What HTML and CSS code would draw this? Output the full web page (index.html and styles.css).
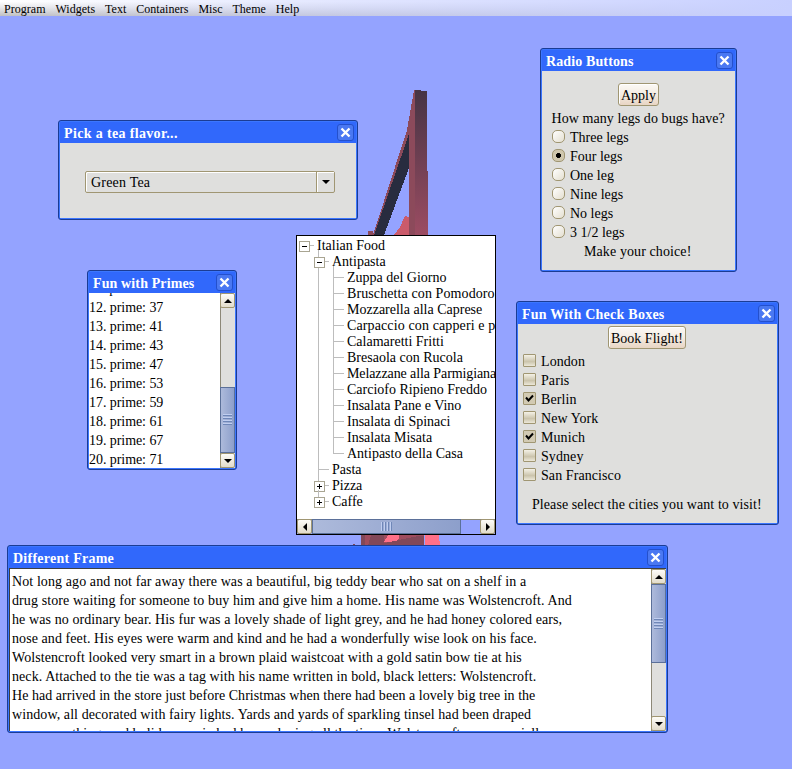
FILE: index.html
```html
<!DOCTYPE html>
<html lang="en">
<head>
<meta charset="utf-8">
<title>Desktop</title>
<link rel="stylesheet" href="styles.css">
</head>
<body>
<nav class="menubar"><span>Program</span><span>Widgets</span><span>Text</span><span>Containers</span><span>Misc</span><span>Theme</span><span>Help</span></nav>

<svg class="scene" viewBox="360 90 82 456" shape-rendering="crispEdges">
  <defs><linearGradient id="beam" x1="0" y1="0" x2="0" y2="1"><stop offset="0" stop-color="#453444"/><stop offset="1" stop-color="#9c4c62"/></linearGradient></defs>
  <path d="M414 90H416V235H373L407 130Z" fill="#8c4a5b"/>
  <path d="M415 90L427 91V171H428V235H415Z" fill="url(#beam)"/>
  <path d="M409 168V235H384Z" fill="#94a3ff"/>
  <path d="M409 134V168L384 235H374Z" fill="#282c3f"/>
  <path d="M394 235L400 227L405 216L409 217V235Z" fill="#cb5b6b"/>
  <path d="M368 231H373V235H368Z" fill="#8c4a5b"/>
  <path d="M361 535H424V546H361Z" fill="#9f4c5e"/>
  <path d="M353 544H355V546H353Z M361 535H365V546H361Z M371 535L368 546H384V535Z" fill="#824858"/>
  <path d="M388 535H399V539L395 542H384Z" fill="#ff7088"/>
  <path d="M425 535H439L440 546H425Z" fill="#ff7088"/>
  <path d="M380 544L418 536H424V546H380Z" fill="#824858"/>
</svg>

<section class="window tea">
  <header class="title"><span>Pick a tea flavor...</span><i class="close"><svg viewBox="0 0 17 17"><path d="M4.5 4.5L12.5 12.5M12.5 4.5L4.5 12.5"/></svg></i></header>
  <div class="pane"><div class="combo"><span>Green Tea</span><i><svg viewBox="0 0 8 4"><path d="M0 0H8L4 4Z"/></svg></i></div></div>
</section>

<section class="window primes">
  <header class="title"><span>Fun with Primes</span><i class="close"><svg viewBox="0 0 17 17"><path d="M4.5 4.5L12.5 12.5M12.5 4.5L4.5 12.5"/></svg></i></header>
  <div class="scrollpane">
    <ul class="list"><li>11. prime: 31</li><li>12. prime: 37</li><li>13. prime: 41</li><li>14. prime: 43</li><li>15. prime: 47</li><li>16. prime: 53</li><li>17. prime: 59</li><li>18. prime: 61</li><li>19. prime: 67</li><li>20. prime: 71</li></ul>
    <div class="vbar"><b class="arrow"><svg viewBox="0 0 8 4"><path d="M0 4H8L4 0Z"/></svg></b><div class="gap"></div><div class="thumb"><i class="grip"></i></div><b class="arrow"><svg viewBox="0 0 8 4"><path d="M0 0H8L4 4Z"/></svg></b></div>
  </div>
</section>

<section class="window radios">
  <header class="title"><span>Radio Buttons</span><i class="close"><svg viewBox="0 0 17 17"><path d="M4.5 4.5L12.5 12.5M12.5 4.5L4.5 12.5"/></svg></i></header>
  <div class="pane">
    <button class="button">Apply</button>
    <p class="question">How many legs do bugs have?</p>
    <label class="opt"><i class="radio"></i>Three legs</label>
    <label class="opt"><i class="radio on"></i>Four legs</label>
    <label class="opt"><i class="radio"></i>One leg</label>
    <label class="opt"><i class="radio"></i>Nine legs</label>
    <label class="opt"><i class="radio"></i>No legs</label>
    <label class="opt"><i class="radio"></i>3 1/2 legs</label>
    <p class="note">Make your choice!</p>
  </div>
</section>

<section class="window checks">
  <header class="title"><span>Fun With Check Boxes</span><i class="close"><svg viewBox="0 0 17 17"><path d="M4.5 4.5L12.5 12.5M12.5 4.5L4.5 12.5"/></svg></i></header>
  <div class="pane">
    <button class="button">Book Flight!</button>
    <label class="opt"><i class="check"></i>London</label>
    <label class="opt"><i class="check"></i>Paris</label>
    <label class="opt"><i class="check on"><svg viewBox="0 0 13 13"><path d="M3 5.5L5.5 8.5L10 3.5"/></svg></i>Berlin</label>
    <label class="opt"><i class="check"></i>New York</label>
    <label class="opt"><i class="check on"><svg viewBox="0 0 13 13"><path d="M3 5.5L5.5 8.5L10 3.5"/></svg></i>Munich</label>
    <label class="opt"><i class="check"></i>Sydney</label>
    <label class="opt"><i class="check"></i>San Francisco</label>
    <p class="note">Please select the cities you want to visit!</p>
  </div>
</section>

<section class="treebox">
  <div class="treeview">
    <ul class="tree">
      <li class="root open"><span>Italian Food</span>
        <ul>
          <li class="open"><span>Antipasta</span>
            <ul>
              <li><span>Zuppa del Giorno</span></li>
              <li><span class="wide">Bruschetta con Pomodoro</span></li>
              <li><span>Mozzarella alla Caprese</span></li>
              <li><span class="wider">Carpaccio con capperi e p</span></li>
              <li><span>Calamaretti Fritti</span></li>
              <li><span>Bresaola con Rucola</span></li>
              <li><span class="narrow">Melazzane alla Parmigiana</span></li>
              <li><span>Carciofo Ripieno Freddo</span></li>
              <li><span>Insalata Pane e Vino</span></li>
              <li><span>Insalata di Spinaci</span></li>
              <li><span>Insalata Misata</span></li>
              <li><span>Antipasto della Casa</span></li>
            </ul>
          </li>
          <li><span>Pasta</span></li>
          <li class="closed"><span>Pizza</span></li>
          <li class="closed"><span>Caffe</span></li>
        </ul>
      </li>
    </ul>
  </div>
  <div class="hbar"><b class="arrow"><svg viewBox="0 0 4 8"><path d="M4 0V8L0 4Z"/></svg></b><div class="thumb"><i class="grip"></i></div><div class="gap"></div><b class="arrow"><svg viewBox="0 0 4 8"><path d="M0 0V8L4 4Z"/></svg></b></div>
</section>

<section class="window story">
  <header class="title"><span>Different Frame</span><i class="close"><svg viewBox="0 0 17 17"><path d="M4.5 4.5L12.5 12.5M12.5 4.5L4.5 12.5"/></svg></i></header>
  <div class="scrollpane">
    <div class="text">
      <p>Not long ago and not far away there was a beautiful, big teddy bear who sat on a shelf in a</p>
      <p>drug store waiting for someone to buy him and give him a home. His name was Wolstencroft. And</p>
      <p>he was no ordinary bear. His fur was a lovely shade of light grey, and he had honey colored ears,</p>
      <p class="mid">nose and feet. His eyes were warm and kind and he had a wonderfully wise look on his face.</p>
      <p class="mid">Wolstencroft looked very smart in a brown plaid waistcoat with a gold satin bow tie at his</p>
      <p class="mid">neck. Attached to the tie was a tag with his name written in bold, black letters: Wolstencroft.</p>
      <p class="tight">He had arrived in the store just before Christmas when there had been a lovely big tree in the</p>
      <p class="mid">window, all decorated with fairy lights. Yards and yards of sparkling tinsel had been draped</p>
      <p class="mid">over everything, and holiday music had been playing all the time. Wolstencroft was especially</p>
    </div>
    <div class="vbar"><b class="arrow"><svg viewBox="0 0 8 4"><path d="M0 4H8L4 0Z"/></svg></b><div class="thumb"><i class="grip"></i></div><div class="gap"></div><b class="arrow"><svg viewBox="0 0 8 4"><path d="M0 0H8L4 4Z"/></svg></b></div>
  </div>
</section>
</body>
</html>
```
FILE: styles.css
```css
* { box-sizing: border-box; }
html, body { margin: 0; height: 100%; overflow: hidden; }
body { position: relative; background: #94a3ff; color: #000; font: 14px/19px "Liberation Serif", serif; }
p, ul { margin: 0; padding: 0; list-style: none; }
i, b { font-style: normal; display: block; flex: none; }
svg { display: block; }
span, p, li, label { white-space: nowrap; }

.menubar { display: flex; gap: 9.9px; height: 16px; padding: 1px 4px 0; font-size: 12px; line-height: 16px; letter-spacing: .03px;
  background: linear-gradient(90deg, rgba(200,208,255,0), rgba(200,208,255,.55) 45%, #c8d0ff), linear-gradient(#fff 10%, #e6e6e8 50%, #c0c0c2); }

.scene { position: absolute; left: 360px; top: 90px; width: 82px; height: 456px; overflow: visible; }

.window { position: absolute; display: flex; flex-direction: column; border: 1px solid #1b3c94; border-radius: 3px; background: #3b76ff; padding: 1px; overflow: hidden; }
.tea { left: 58px; top: 120px; width: 300px; height: 100px; }
.primes { left: 87px; top: 270px; width: 150px; height: 200px; }
.radios { left: 540px; top: 48px; width: 197px; height: 224px; }
.checks { left: 516px; top: 301px; width: 263px; height: 224px; }
.story { left: 7px; top: 545px; width: 661px; height: 188px; }

.title { display: flex; justify-content: space-between; align-items: center; height: 21px; flex: none; padding: 0 2px 0 4px; color: #fff; font-weight: bold; letter-spacing: .25px; background: #3168fb; }
.title span { padding-top: 2px; }
.tea .title { letter-spacing: .35px; }
.primes .title { letter-spacing: .12px; }
.radios .title { letter-spacing: .12px; }
.close { width: 17px; height: 17px; border: 1px solid #2450cc; border-radius: 3px; background: #4a78f2; }
.close svg { width: 17px; height: 17px; margin: -1px; }
.close path { stroke: #fff; stroke-width: 2.4; fill: none; }

.pane { flex: 1; background: #dfdfdd; display: flex; flex-direction: column; }
.scrollpane { flex: 1; min-height: 0; display: flex; background: #fff; overflow: hidden; }

.combo { display: flex; width: 250px; height: 22px; margin: 28px 0 0 25px; border: 1px solid #a09672; border-radius: 2px; box-shadow: inset 1px 1px #fff; letter-spacing: .2px; }
.combo span { flex: 1; padding: 1px 0 0 5px; }
.combo i { width: 18px; border-left: 1px solid #a09672; box-shadow: inset 1px 1px #fff; padding: 8px 0 0 5px; }
.combo svg { width: 8px; height: 4px; }

.list { flex: 1; margin-top: -14px; letter-spacing: -.06px; }
.vbar { width: 15px; flex: none; display: flex; flex-direction: column; background: #dfdfdd; border-left: 1px solid #8c8878; }
.arrow { width: 15px; height: 15px; border: 1px solid #a09672; border-radius: 2px; background: linear-gradient(#fdfcf8, #e2dccb); display: flex; align-items: center; justify-content: center; }
.vbar .arrow { margin-left: -1px; }
.vbar .arrow svg { width: 8px; height: 4px; }
.hbar .arrow svg { width: 4px; height: 8px; }
.thumb { display: flex; align-items: center; justify-content: center; flex: none; border: 1px solid #5b7099; background: linear-gradient(90deg, #adbadb, #8d9fcb); }
.vbar .thumb { margin-left: -1px; width: 15px; }
.gap { flex: 1; }
.vbar .grip { width: 9px; height: 12px; background: repeating-linear-gradient(#c0cef0 0 1px, #6f87b8 1px 2px, transparent 2px 3px); }
.primes .thumb { height: 66px; }
.story .thumb { height: 79px; }

.button { align-self: center; height: 23px; padding: 1px 0 0; font: inherit; color: #000; border: 1px solid #a09672; border-radius: 3px; background: linear-gradient(#fbf9f5, #f4ece2 50%, #e8d5c4); box-shadow: inset 1px 1px #fff; }
.opt { display: flex; align-items: flex-start; height: 19px; }
.radio { width: 13px; height: 13px; margin: 2px 5px 0 0; border: 1px solid #a09672; border-radius: 5px; background: linear-gradient(135deg, #fff, #e4dfd0); }
.radio.on { background: radial-gradient(circle, #000 0 2.2px, #cfc7ae 2.8px); }
.radios .pane { padding: 12px 0 0 10px; }
.radios .button { width: 41px; margin-right: 10px; }
.question { margin: 3px 0 0 -.5px; letter-spacing: .07px; }
.radios .note { margin-left: 32px; letter-spacing: .1px; }

.checks .pane { padding: 2px 0 0 5px; }
.checks .button { width: 78px; margin-right: 6px; margin-bottom: 3px; }
.checks .opt { letter-spacing: .08px; }
.check { width: 13px; height: 13px; margin: 2px 5px 0 0; border: 1px solid #a09672; border-radius: 1px; background: linear-gradient(#f4f1e6, #cbc4ac 60%, #ece8d9); }
.check.on { background: #d2cab3; }
.check svg { width: 13px; height: 13px; margin: -1px; }
.check path { stroke: #000; stroke-width: 2; fill: none; }
.checks .note { margin: 10px 0 0 9px; letter-spacing: .07px; }

.treebox { position: absolute; left: 296px; top: 235px; width: 200px; height: 300px; border: 1px solid #000; display: flex; flex-direction: column; }
.treeview { flex: 1; background: #fff; overflow: hidden; padding: 2px 0 0 5px; line-height: 16px; }
.tree li { position: relative; padding-left: 15px; }
.tree span { display: block; height: 16px; }
.tree .wide { letter-spacing: .1px; }
.tree .wider { letter-spacing: .12px; }
.tree .narrow { letter-spacing: -.1px; }
.tree ul li::before { content: ""; position: absolute; left: 1px; top: -4px; bottom: 0; border-left: 1px solid #bdbdbd; }
.tree ul li:last-child::before { bottom: auto; height: 12px; }
.tree ul span::before { content: ""; position: absolute; left: 1px; top: 7px; width: 11px; height: 1px; background: #bdbdbd; }
.open::after, .closed::after { content: ""; position: absolute; left: -3px; top: 3px; width: 9px; height: 9px; border: 1px solid #a9a592; background: linear-gradient(#000, #000) center / 5px 1px no-repeat, #fff; }
.closed::after { background: linear-gradient(#000, #000) center / 5px 1px no-repeat, linear-gradient(#000, #000) center / 1px 5px no-repeat, #fff; }
.root > span::before { content: ""; position: absolute; left: 6px; top: 7px; width: 6px; height: 1px; background: #bdbdbd; }
.hbar { height: 15px; flex: none; display: flex; border-top: 1px solid #8c8878; }
.hbar .arrow { margin-top: -1px; }
.hbar .thumb { width: 149px; margin-top: -1px; height: 15px; }
.hbar .grip { width: 12px; height: 9px; background: repeating-linear-gradient(90deg, #c0cef0 0 1px, #6f87b8 1px 2px, transparent 2px 3px); }

.story .scrollpane { border-top: 1px solid #404040; border-left: 1px solid #404040; }
.text { flex: 1; padding: 3px 0 0 2px; overflow: hidden; letter-spacing: .094px; }
.text .mid { letter-spacing: .079px; }
.text .tight { letter-spacing: .034px; }
```
